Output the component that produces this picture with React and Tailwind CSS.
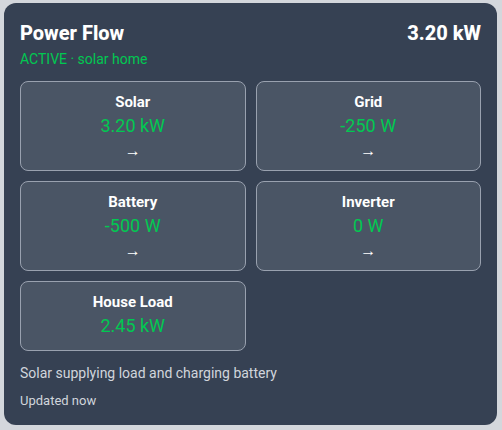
const nodes = [
  { name: 'Solar', value: '3.20 kW', arrow: true },
  { name: 'Grid', value: '-250 W', arrow: true },
  { name: 'Battery', value: '-500 W', arrow: true },
  { name: 'Inverter', value: '0 W', arrow: true },
  { name: 'House Load', value: '2.45 kW', arrow: false },
];

export default function App() {
  return (
    <div
      className="min-h-screen bg-[#d4d7dc] pl-1 pr-[5px] pt-[3px] pb-[5px]"
      style={{ fontFamily: 'Roboto, "Noto Sans", sans-serif' }}
    >
      <div className="rounded-xl bg-gray-700 p-4 text-white">
        {/* Header */}
        <div className="flex items-start justify-between">
          <div>
            <h2 className="text-xl font-extrabold leading-7">Power Flow</h2>
            <p className="mt-0.5 text-sm text-green-500">ACTIVE · solar home</p>
          </div>
          <span className="text-xl font-extrabold leading-7">3.20 kW</span>
        </div>

        {/* Nodes */}
        <div className="mt-3 grid grid-cols-2 gap-2.5">
          {nodes.map((node) => (
            <div
              key={node.name}
              className="flex flex-col items-center rounded-lg border border-gray-400 bg-gray-600 py-2.5"
            >
              <span className="text-[15px] font-bold leading-5">{node.name}</span>
              <span className="text-lg leading-7 text-green-500">{node.value}</span>
              {node.arrow && <span className="pt-0.5 text-base leading-[18px]">→</span>}
            </div>
          ))}
        </div>

        <p className="mt-3 text-sm text-gray-300">Solar supplying load and charging battery</p>
        <p className="mt-2.5 text-[13px] leading-4 text-gray-300">Updated now</p>
      </div>
    </div>
  );
}
